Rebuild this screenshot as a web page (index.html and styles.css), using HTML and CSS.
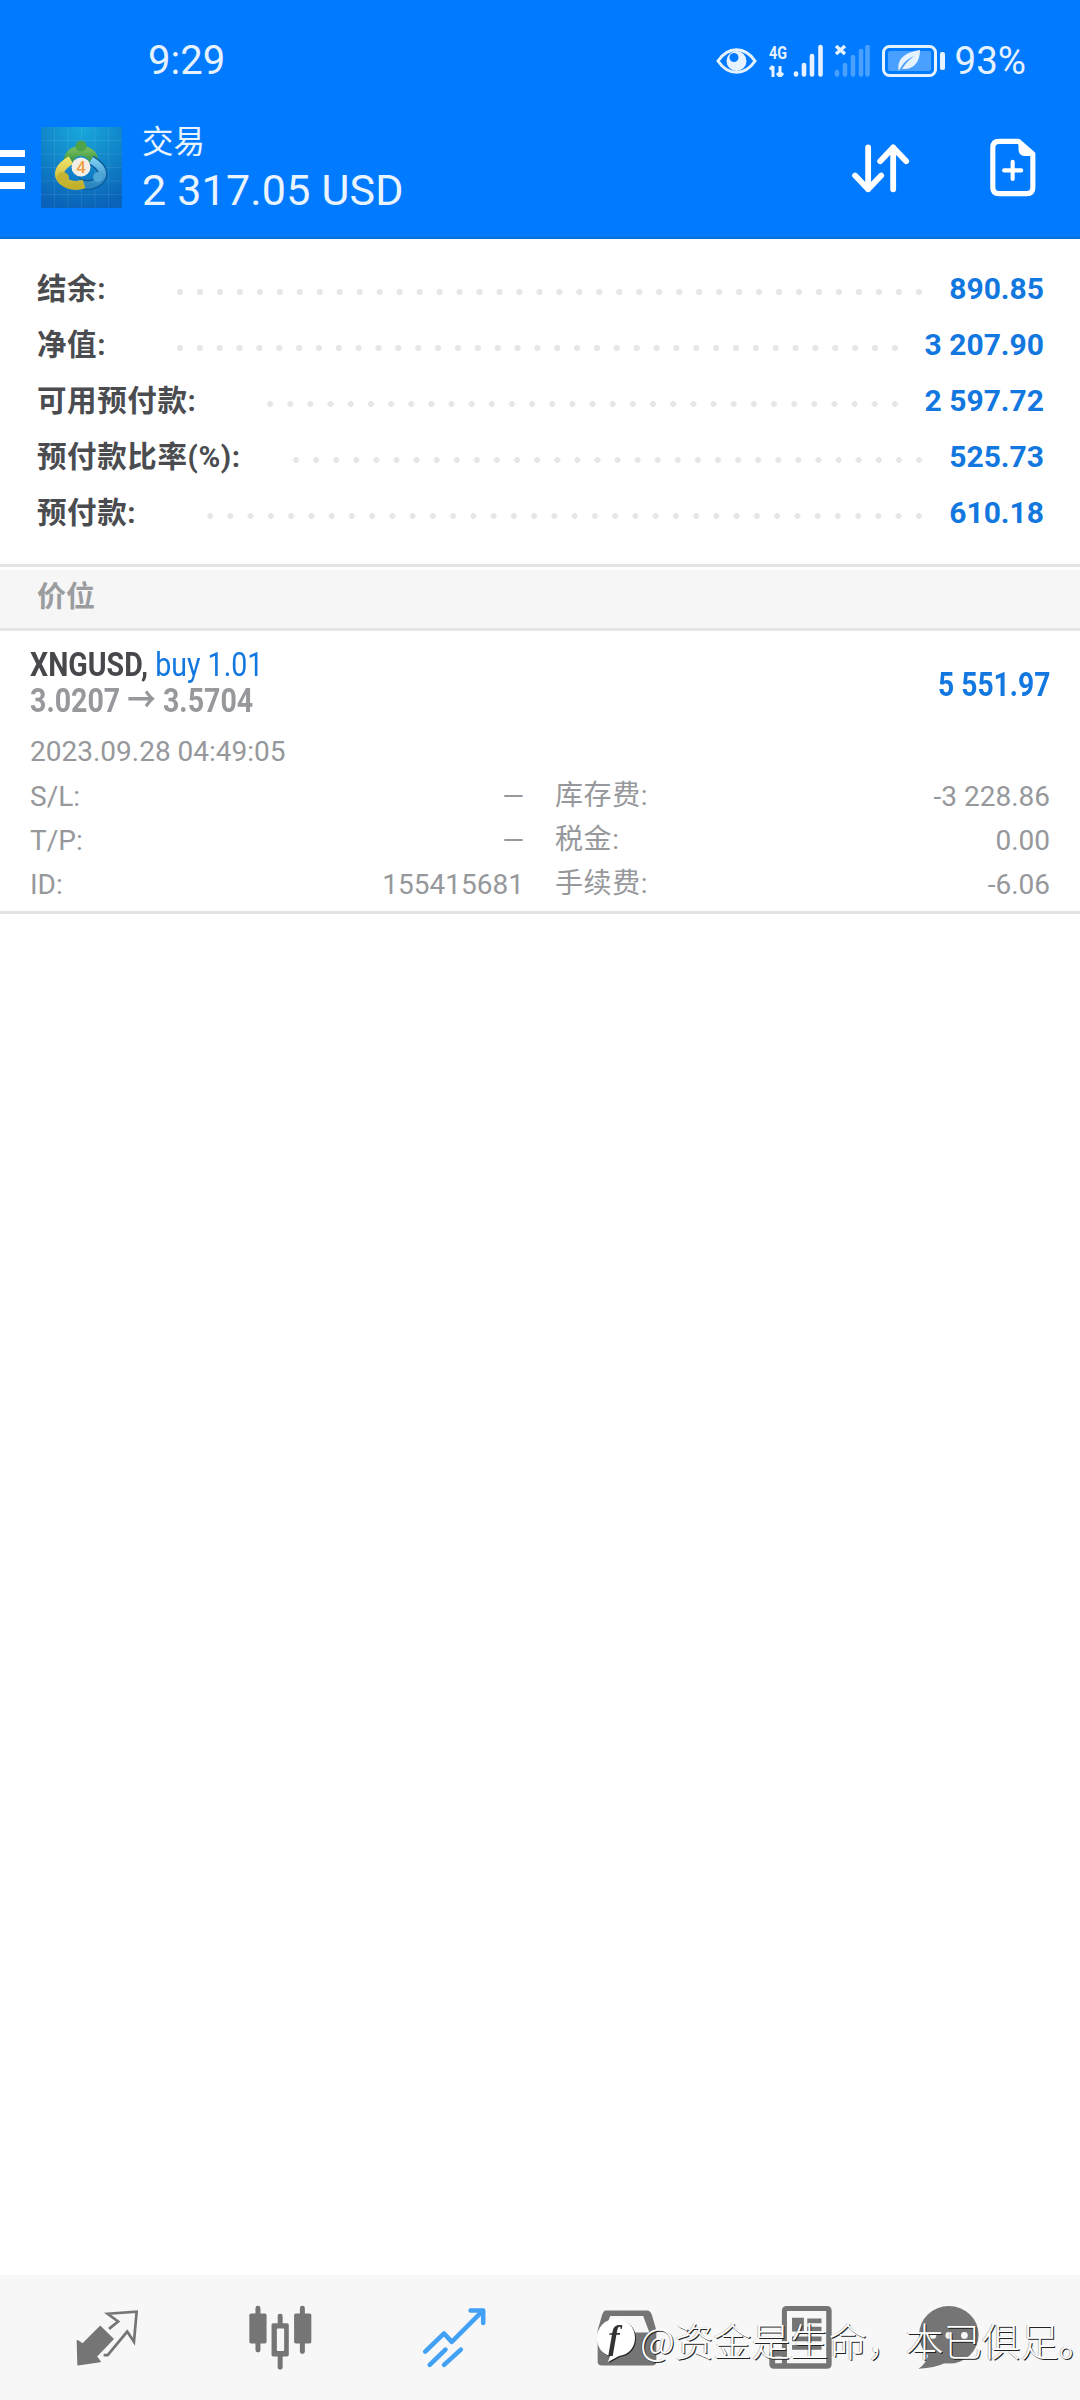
FILE: index.html
```html
<!DOCTYPE html>
<html lang="zh-CN">
<head>
<meta charset="utf-8">
<title>交易</title>
<link rel="stylesheet" href="styles.css">
</head>
<body>
<div class="app">
  <header class="header">
    <div class="status">
      <span class="clock">9:29</span>
      <div class="status-icons">
        <svg class="ic-eye" viewBox="0 0 41 28"><path d="M2 14C12 -1 29 -1 39 14C29 29 12 29 2 14Z" fill="none" stroke="#e6f2ff" stroke-width="3"/><circle cx="20.500" cy="14" r="10" fill="#e6f2ff"/><circle cx="18" cy="10.500" r="4.500" fill="#007aff"/></svg>
        <svg class="ic-net1" viewBox="0 -8 55 40"><text x="0" y="14" class="net-text" textLength="18" lengthAdjust="spacingAndGlyphs">4G</text><path d="M4 32V21M1 24.500L4 21M11 21V31M8 28L11 31.500L14 28" fill="none" stroke="#e6f2ff" stroke-width="3"/><g stroke="#e6f2ff" stroke-width="4.600" stroke-linecap="round"><path d="M27 29.500V28.500"/><path d="M35 29.500V20"/><path d="M43 29.500V11"/><path d="M51.500 29.500V2"/></g></svg>
        <svg class="ic-net2" viewBox="0 0 36 32"><path d="M2 1L11 9M11 1L2 9" stroke="#e6f2ff" stroke-width="3.400"/><g stroke="#e6f2ff" stroke-opacity=".32" stroke-width="4.600" stroke-linecap="round"><path d="M3 29.500V27"/><path d="M11 29.500V20"/><path d="M19 29.500V12"/><path d="M27 29.500V6"/><path d="M33.500 29.500V2"/></g></svg>
        <svg class="ic-batt" viewBox="0 0 64 32"><rect x="1.500" y="1.500" width="52" height="29" rx="6" fill="none" stroke="#e6f2ff" stroke-width="3"/><rect x="6" y="6" width="43" height="20" rx="2" fill="#e6f2ff" fill-opacity=".32"/><path d="M17 26C14 14 24 7 38 5C38 18 31 25 20 24C24 18 27 15 32 11C25 14 20 19 17 26Z" fill="#e6f2ff"/><rect x="58" y="7" width="5" height="18" rx="2" fill="#e6f2ff"/></svg>
        <span class="pct">93%</span>
      </div>
    </div>
    <div class="toolbar">
      <div class="burger"><span></span><span></span><span></span></div>
      <svg class="logo" viewBox="0 0 81 81">
        <defs>
          <radialGradient id="bg" cx=".5" cy="0" r="1"><stop offset="0" stop-color="#18a9dc"/><stop offset="1" stop-color="#0a63b8"/></radialGradient>
          <linearGradient id="gr" x1="0" y1="0" x2="0" y2="1"><stop offset="0" stop-color="#6db858"/><stop offset="1" stop-color="#2f8a3c"/></linearGradient>
          <linearGradient id="ye" x1="0" y1="0" x2="0" y2="1"><stop offset="0" stop-color="#efe26a"/><stop offset="1" stop-color="#c2b02a"/></linearGradient>
          <linearGradient id="bl" x1="0" y1="0" x2="0" y2="1"><stop offset="0" stop-color="#7ccdf0"/><stop offset="1" stop-color="#2a86bf"/></linearGradient>
        </defs>
        <rect width="81" height="81" fill="url(#bg)"/>
        <path d="M13.500 0V81M27 0V81M40.500 0V81M54 0V81M67.500 0V81M0 13.500H81M0 27H81M0 40.500H81M0 54H81M0 67.500H81" stroke="#fff" stroke-opacity=".08"/>
        <path d="M27 37Q28 24 40 24Q52 24 53 37" fill="none" stroke="url(#gr)" stroke-width="10"/>
        <path d="M50 33Q68 44 58 54Q48 62 36 55" fill="none" stroke="#0c5c9e" stroke-width="10"/>
        <path d="M50 33Q68 44 58 54Q48 62 36 55" fill="none" stroke="url(#bl)" stroke-width="7"/>
        <path d="M30 33Q12 44 22 54Q31 61 43 57" fill="none" stroke="url(#ye)" stroke-width="9"/>
        <circle cx="40" cy="19" r="5.500" fill="#4fa34a"/>
        <circle cx="22" cy="51" r="6" fill="#c4b432"/>
        <circle cx="57" cy="50" r="5" fill="#4ea6d6"/>
        <circle cx="40" cy="40" r="9.500" fill="#f3efe6"/>
        <text x="40" y="46" class="logo-four">4</text>
      </svg>
      <div class="title-block">
        <div class="title">交易</div>
        <div class="balance">2 317.05 USD</div>
      </div>
      <svg class="ic-swap" viewBox="905 428 175 150"><path d="M955 443V565M917 525L955 565L993 525M1028 565V443M990 483L1028 443L1066 483" fill="none" stroke="#fff" stroke-width="17" stroke-linecap="round" stroke-linejoin="round"/></svg>
      <svg class="ic-file" viewBox="1300 410 152 186"><path d="M1335 425H1392L1434 462V560Q1434 578 1416 578H1335Q1317 578 1317 560V443Q1317 425 1335 425Z" fill="none" stroke="#fff" stroke-width="15" stroke-linejoin="round"/><path d="M1392 425V448Q1392 468 1412 468H1434Z" fill="#fff"/><path d="M1350 510H1400M1375 485V535" stroke="#fff" stroke-width="12" stroke-linecap="round"/></svg>
    </div>
  </header>

  <main class="main">
    <section class="summary">
      <div class="sum-row"><span class="sum-label">结余:</span><span class="dots"></span><span class="sum-val">890.85</span></div>
      <div class="sum-row"><span class="sum-label">净值:</span><span class="dots"></span><span class="sum-val">3 207.90</span></div>
      <div class="sum-row"><span class="sum-label">可用预付款:</span><span class="dots"></span><span class="sum-val">2 597.72</span></div>
      <div class="sum-row"><span class="sum-label">预付款比率(%):</span><span class="dots dots-tight"></span><span class="sum-val">525.73</span></div>
      <div class="sum-row"><span class="sum-label">预付款:</span><span class="dots"></span><span class="sum-val">610.18</span></div>
    </section>
    <div class="section-head"><span>价位</span></div>
    <article class="position">
      <div class="pos-head">
        <div class="pos-lines">
          <div class="pos-line"><b class="sym">XNGUSD,</b> <span class="side">buy 1.01</span></div>
          <div class="pos-line prices">3.0207 → 3.5704</div>
        </div>
        <div class="profit">5 551.97</div>
      </div>
      <div class="pos-date">2023.09.28 04:49:05</div>
      <div class="pos-grid">
        <div class="cell"><span>S/L:</span><span>—</span></div>
        <div class="cell"><span class="cjk">库存费:</span><span>-3 228.86</span></div>
        <div class="cell"><span>T/P:</span><span>—</span></div>
        <div class="cell"><span class="cjk">税金:</span><span>0.00</span></div>
        <div class="cell"><span>ID:</span><span>155415681</span></div>
        <div class="cell"><span class="cjk">手续费:</span><span>-6.06</span></div>
      </div>
    </article>
  </main>

  <nav class="tabs">
    <div class="tab"><svg class="tab-ic tab-ic-small" viewBox="220 148 184 168"><path d="M224 240L240 250L292 198L330 235L280 287L292 302L226 312Z" fill="#757575" stroke="#757575" stroke-width="4" stroke-linejoin="round"/><path d="M318 205L345 183L314 160L400 154L392 243L372 213L314 283H302" fill="none" stroke="#757575" stroke-width="8"/></svg></div>
    <div class="tab"><svg class="tab-ic" viewBox="716 132 196 196"><path d="M746 142V268M813 166V320M880 142V272" stroke="#757575" stroke-width="15" stroke-linecap="round"/><rect x="720" y="158" width="52" height="90" rx="5" fill="#757575"/><rect x="855" y="158" width="52" height="90" rx="5" fill="#757575"/><rect x="787" y="187" width="52" height="100" rx="5" fill="#757575"/><rect x="803" y="203" width="22" height="68" rx="3" fill="#f7f7f7"/></svg></div>
    <div class="tab"><svg class="tab-ic" viewBox="1222 140 186 175"><path d="M1234 268L1288 216L1310 240L1392 158M1247 306L1292 262M1288 306L1336 262" fill="none" stroke="#42a0f5" stroke-width="13" stroke-linecap="round" stroke-linejoin="round"/><path d="M1364 150H1400V186" fill="none" stroke="#42a0f5" stroke-width="13" stroke-linecap="round" stroke-linejoin="round"/></svg></div>
    <div class="tab"><svg class="tab-ic tab-ic-small" viewBox="160 140 188 177"><path fill-rule="evenodd" d="M190 145H315Q325 145 330 160L343 205V300Q343 312 330 312H178Q165 312 165 300V205L178 160Q183 145 190 145ZM203 162L184 212H236V235H272V212H322L303 162Z" fill="#757575"/></svg></div>
    <div class="tab"><svg class="tab-ic" viewBox="664 132 192 192"><path fill-rule="evenodd" d="M720 135H838Q852 135 852 149V306Q852 320 838 320H682Q668 320 668 306V280Q668 268 678 268H705V149Q705 135 720 135ZM720 150V304H836V150ZM685 284V304H705V284Z" fill="#757575"/><path d="M735 170H770V210H735ZM780 172H822V186H780ZM780 196H822V210H780ZM735 225H822V239H735ZM735 250H822V264H735Z" fill="#757575"/></svg></div>
    <div class="tab tab-last"><svg class="tab-ic" viewBox="1096 132 186 192"><ellipse cx="1190" cy="220" rx="88" ry="85" fill="#757575"/><path d="M1130 275Q1125 305 1100 320Q1150 318 1185 300Z" fill="#757575"/><circle cx="1143" cy="222" r="10" fill="#f7f7f7"/><circle cx="1190" cy="222" r="10" fill="#f7f7f7"/><circle cx="1236" cy="222" r="10" fill="#f7f7f7"/></svg></div>
  </nav>

  <div class="watermark">
    <svg class="wm-logo" viewBox="0 0 38 44"><path d="M19 1C31 1 38 9 38 20C38 30 31 37 22 38L11 44L13 38C5 36 0 29 0 20C0 9 8 1 19 1Z" fill="#fff"/><text x="17" y="31" class="wm-f">f</text></svg>
    <span class="wm-text">@资金是生命，本已俱足<span class="wm-end">。</span></span>
  </div>
</div>
</body>
</html>
```
FILE: styles.css
```css
* { box-sizing: border-box; }
html, body { margin: 0; padding: 0; background: #fff; }
.app {
  position: relative;
  width: 1080px;
  height: 2400px;
  display: flex;
  flex-direction: column;
  overflow: hidden;
  font-family: Roboto, "Noto Sans CJK SC", sans-serif;
}

/* header */
.header {
  height: 239px;
  background: #007aff;
  border-bottom: 2px solid #0a6fd8;
  color: #fff;
}
.status {
  height: 80px;
  padding: 42px 54px 0 148px;
  display: flex;
  align-items: center;
  justify-content: space-between;
  color: #e6f2ff;
}
.clock { font-size: 40px; line-height: 40px; }
.status-icons { display: flex; align-items: center; }
.ic-eye { width: 41px; height: 28px; margin-right: 12px; }
.ic-net1 { width: 55px; height: 40px; margin: -8px 10px 0 0; }
.ic-net2 { width: 36px; height: 32px; margin-right: 12px; }
.ic-batt { width: 64px; height: 32px; margin-right: 9px; }
.pct { font-size: 38.500px; line-height: 40px; }
.net-text { font: 700 19px Roboto, sans-serif; fill: #e6f2ff; }

.toolbar {
  display: flex;
  align-items: flex-start;
  padding: 41px 41px 0 0;
}
.burger {
  display: flex;
  flex-direction: column;
  gap: 9px;
  width: 25px;
  margin: 29px 16px 0 0;
}
.burger span { display: block; height: 7px; background: #fff; }
.logo { width: 81px; height: 81px; margin-top: 6px; flex: none; }
.logo-four { font: 500 17px Roboto, sans-serif; fill: #ef9f45; text-anchor: middle; }
.title-block { margin-left: 20px; flex: 1; color: #e9f4ff; }
.title { font: 400 31.500px/37px "Noto Sans CJK SC", sans-serif; }
.balance { font-size: 43px; line-height: 65px; letter-spacing: .2px; }
.ic-swap { width: 60px; height: 52px; margin: 21px 76px 0 0; flex: none; }
.ic-file { width: 52px; height: 64px; margin: 15px 0 0 0; flex: none; }

/* account summary */
.main { flex: 1; }
.summary { padding: 22px 36px 23px 37px; }
.sum-row {
  height: 56px;
  display: flex;
  align-items: center;
}
.sum-label {
  font: 700 29.500px/40px Roboto, "Noto Sans CJK SC", sans-serif;
  color: #4a4c50;
  letter-spacing: .6px;
}
.dots {
  flex: 1;
  height: 6px;
  margin: 5px 20px 0 64px;
  background-image: radial-gradient(circle at center, #e6e6e6 0, #e6e6e6 2.800px, transparent 3.200px);
  background-size: 20px 6px;
  background-repeat: round no-repeat;
}
.dots-tight { margin-left: 45px; }
.sum-val {
  font-size: 30px;
  font-weight: 700;
  color: #1278e0;
  line-height: 40px;
}
.section-head {
  height: 67px;
  border-top: 3px solid #e4e4e4;
  border-bottom: 3px solid #e4e4e4;
  background: linear-gradient(#fff 0, #fff 3px, #f6f6f6 3px);
  padding: 0 37px 8px;
  display: flex;
  align-items: center;
  font: 700 29px/40px "Noto Sans CJK SC", sans-serif;
  color: #9a9c9f;
}

/* position card */
.position {
  height: 283px;
  padding: 15px 30px 0;
  border-bottom: 3px solid #e4e4e4;
  color: #96989b;
}
.pos-head { display: flex; align-items: center; justify-content: space-between; }
.pos-line {
  font-size: 34px;
  line-height: 36px;
  transform: scaleX(.84);
  transform-origin: left center;
  white-space: nowrap;
}
.sym { color: #46484c; font-weight: 700; }
.side { color: #1278e0; }
.prices { font-weight: 700; color: #96989b; }
.profit {
  font-size: 34px;
  font-weight: 700;
  color: #1278e0;
  transform: scaleX(.83);
  transform-origin: right center;
  padding-top: 4px;
}
.pos-date { margin-top: 11px; font-size: 28px; line-height: 46px; }
.pos-grid {
  display: grid;
  grid-template-columns: 494px 495px;
  column-gap: 31px;
  font-size: 28px;
  line-height: 44px;
  grid-auto-rows: 44px;
}
.cell { display: flex; justify-content: space-between; white-space: nowrap; }
.cjk { font-size: 28px; margin-top: -1px; letter-spacing: .6px; }

/* tab bar */
.tabs {
  height: 125px;
  padding-left: 20px;
  background: #f7f7f7;
  display: flex;
  align-items: center;
}
.tab { width: 173.500px; display: flex; justify-content: center; }
.tab-last { width: 121px; }
.tab-ic { width: 65px; height: 65px; }
.tab-ic-small { width: 62px; height: 62px; }

/* watermark */
.watermark {
  position: absolute;
  left: 597px;
  top: 2316px;
  display: flex;
  align-items: center;
  gap: 5px;
}
.wm-logo { width: 38px; height: 44px; filter: drop-shadow(1px 1px 0 #222); margin-top: 2px; }
.wm-f { font: italic 700 34px "Liberation Serif", serif; fill: #333; text-anchor: middle; }
.wm-text {
  font: 300 38.400px/44px "Noto Sans CJK SC", sans-serif;
  color: #fff;
  white-space: nowrap;
  text-shadow: 1px 1px 0 #222, -1px 0 0 rgba(0,0,0,.25);
}
.wm-end { font-feature-settings: "halt"; }
```
